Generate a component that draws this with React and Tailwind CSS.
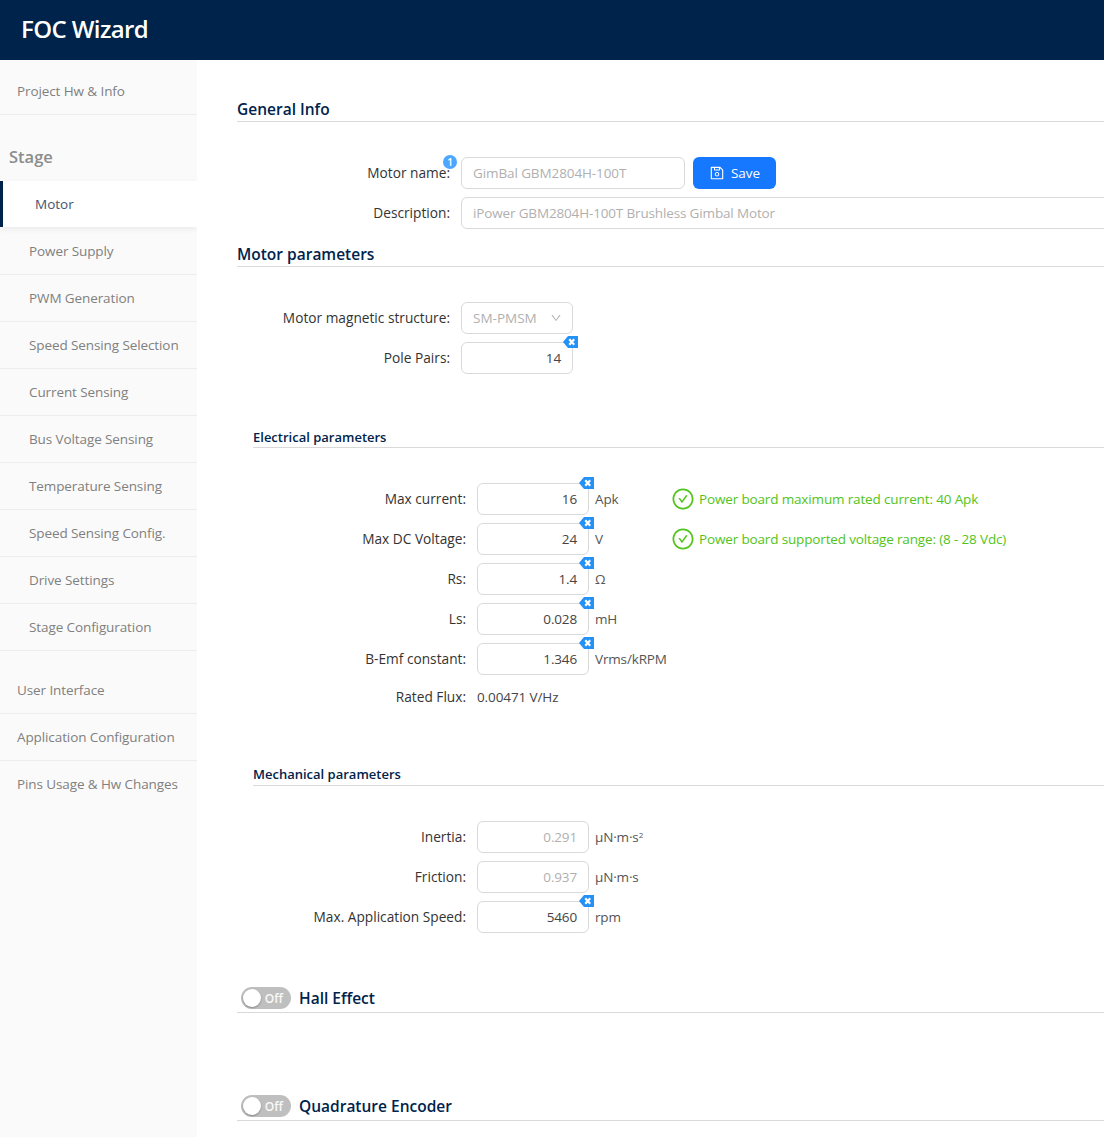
import React from "react";
import { AiOutlineCheckCircle, AiOutlineDown, AiOutlineSave } from "react-icons/ai";

const font = "font-['Open_Sans','Noto_Sans',sans-serif]";

function Tag() {
  return (
    <svg className="absolute right-[-6px] top-[-7px]" width="15" height="12" viewBox="0 0 15 12">
      <path d="M0 6 L5 0 H15 V12 H5 Z" fill="#2491f7" />
      <path d="M6.3 3.2 L11.2 8.8 M11.2 3.2 L6.3 8.8" stroke="#fff" strokeWidth="2.1" fill="none" />
    </svg>
  );
}

function Row({ label, children, className = "mb-2" }) {
  return (
    <div className={`flex items-center h-8 ${className}`}>
      <div className="w-[213px] mr-[11px] text-right text-[13.7px] font-medium text-[#333] shrink-0 whitespace-nowrap">{label}</div>
      {children}
    </div>
  );
}

function Num({ value, unit, disabled, note }) {
  return (
    <>
      <div className={`relative w-28 h-8 border border-[#d9d9d9] rounded-md flex items-center justify-end px-[11px] text-[13.5px] tracking-[-0.15px] ${disabled ? "text-[#b0b0b0]" : "text-[#444]"}`}>
        {value}
        {!disabled && <Tag />}
      </div>
      <span className="ml-[6px] w-[78px] shrink-0 text-[13.5px] tracking-[-0.15px] text-[#555]">{unit}</span>
      {note && (
        <span className="flex items-center ml-[-2px]">
          <AiOutlineCheckCircle className="text-[#52c41a]" size={24} />
          <span className="ml-[4px] text-[13.5px] tracking-[-0.15px] text-[#52c41a] whitespace-nowrap">{note}</span>
        </span>
      )}
    </>
  );
}

function Heading({ children, className = "" }) {
  return (
    <div className={`border-b border-[#d9d9d9] font-semibold text-[#00234b] ${className}`}>{children}</div>
  );
}

function Toggle() {
  return (
    <div className="relative w-[50px] h-[22px] rounded-full bg-[#bfbfbf] mr-2 shrink-0 flex items-center justify-end pr-[8px] pt-px text-[12px] text-white/90">
      Off
      <span className="absolute left-[2px] top-[2px] w-[18px] h-[18px] rounded-full bg-white shadow-[0_1px_2px_rgba(0,0,0,0.3)]" />
    </div>
  );
}

function NavItem({ children, sub, active, last }) {
  if (active) {
    return (
      <div className="h-[46px] mb-px flex items-center bg-white border-l-[3px] border-[#00234b] pl-[32px] text-[13.5px] text-[#44546f] shadow-[0_2px_6px_rgba(0,0,0,0.07)] relative">
        {children}
      </div>
    );
  }
  return (
    <div className={`h-[47px] flex items-center text-[13.5px] tracking-[-0.1px] text-[#808080] whitespace-nowrap ${last ? "" : "border-b border-[#ededed]"} ${sub ? "pl-[29px]" : "pl-[17px]"}`}>
      {children}
    </div>
  );
}

export default function App() {
  return (
    <div className={`h-[1137px] w-[1104px] overflow-hidden bg-white flex flex-col ${font}`}>
      <header className="h-[60px] shrink-0 bg-[#00234b] flex items-center pl-[21px] pb-[2px] text-[24px] font-semibold tracking-[-0.6px] text-white">
        FOC Wizard
      </header>
      <div className="flex flex-1 min-h-0">
        <aside className="w-[197px] shrink-0 bg-[#fafafa] pt-2 overflow-hidden">
          <NavItem>Project Hw &amp; Info</NavItem>
          <div className="h-[66px] flex items-end pb-[11px] pl-[9px] text-[16.5px] font-semibold text-[#8c8c8c]">Stage</div>
          <NavItem sub active>Motor</NavItem>
          <NavItem sub>Power Supply</NavItem>
          <NavItem sub>PWM Generation</NavItem>
          <NavItem sub>Speed Sensing Selection</NavItem>
          <NavItem sub>Current Sensing</NavItem>
          <NavItem sub>Bus Voltage Sensing</NavItem>
          <NavItem sub>Temperature Sensing</NavItem>
          <NavItem sub>Speed Sensing Config.</NavItem>
          <NavItem sub>Drive Settings</NavItem>
          <NavItem sub>Stage Configuration</NavItem>
          <div className="h-4" />
          <NavItem>User Interface</NavItem>
          <NavItem>Application Configuration</NavItem>
          <NavItem last>Pins Usage &amp; Hw Changes</NavItem>
        </aside>
        <main className="flex-1 min-w-0 pl-10 pt-9 overflow-hidden">
          <Heading className="h-[26px] pt-[2px] text-[15.5px] mb-[35px]">General Info</Heading>
          <Row label="Motor name:">
            <div className="relative w-56 h-8 border border-[#d9d9d9] rounded-md flex items-center px-[11px] text-[13.5px] tracking-[-0.1px] text-[#b0b0b0] whitespace-nowrap">
              GimBal GBM2804H-100T
              <span className="absolute left-[-19px] top-[-3px] w-[14px] h-[14px] rounded-full bg-[#4da6ff] text-white text-[10px] font-semibold flex items-center justify-center">1</span>
            </div>
            <div className="ml-2 h-8 w-[83px] rounded-md bg-[#1677ff] text-white text-[13.5px] flex items-center justify-center gap-[6px]">
              <AiOutlineSave size={16} />
              Save
            </div>
          </Row>
          <Row label="Description:" className="mb-3">
            <div className="w-[700px] shrink-0 h-8 border border-[#d9d9d9] rounded-md flex items-center px-[11px] text-[13.5px] tracking-[-0.15px] text-[#b0b0b0] whitespace-nowrap">
              iPower GBM2804H-100T Brushless Gimbal Motor
            </div>
          </Row>
          <Heading className="h-[26px] pt-[2px] text-[15.5px] mb-[35px]">Motor parameters</Heading>
          <Row label="Motor magnetic structure:">
            <div className="w-28 h-8 border border-[#d9d9d9] rounded-md flex items-center justify-between pl-[11px] pr-[10px] text-[13.5px] text-[#b0b0b0]">
              SM-PMSM
              <AiOutlineDown size={12} />
            </div>
          </Row>
          <Row label="Pole Pairs:" className="mb-[53px]">
            <Num value="14" />
          </Row>

          <div className="pl-4">
            <Heading className="h-[21px] pt-px text-[13px] mb-[35px]">Electrical parameters</Heading>
            <Row label="Max current:" ><Num value="16" unit="Apk" note="Power board maximum rated current: 40 Apk" /></Row>
            <Row label="Max DC Voltage:"><Num value="24" unit="V" note="Power board supported voltage range: (8 - 28 Vdc)" /></Row>
            <Row label="Rs:"><Num value="1.4" unit="Ω" /></Row>
            <Row label="Ls:"><Num value="0.028" unit="mH" /></Row>
            <Row label="B-Emf constant:"><Num value="1.346" unit="Vrms/kRPM" /></Row>
            <Row label="Rated Flux:" className="mt-[-2px] mb-[51px]">
              <span className="text-[13.5px] tracking-[-0.1px] text-[#444]">0.00471 V/Hz</span>
            </Row>
            <Heading className="h-[22px] pt-px text-[13px] mb-[35px]">Mechanical parameters</Heading>
            <Row label="Inertia:"><Num disabled value="0.291" unit={<>µN·m·s<sup className="text-[8px]">2</sup></>} /></Row>
            <Row label="Friction:"><Num disabled value="0.937" unit="µN·m·s" /></Row>
            <Row label="Max. Application Speed:" className="mb-[52px]"><Num value="5460" unit="rpm" /></Row>
          </div>
          <Heading className="h-[28px] pt-[2px] text-[15.5px] flex items-start pl-1 mb-[80px]"><Toggle />Hall Effect</Heading>
          <Heading className="h-[28px] pt-[2px] text-[15.5px] flex items-start pl-1"><Toggle />Quadrature Encoder</Heading>
        </main>
      </div>
    </div>
  );
}
